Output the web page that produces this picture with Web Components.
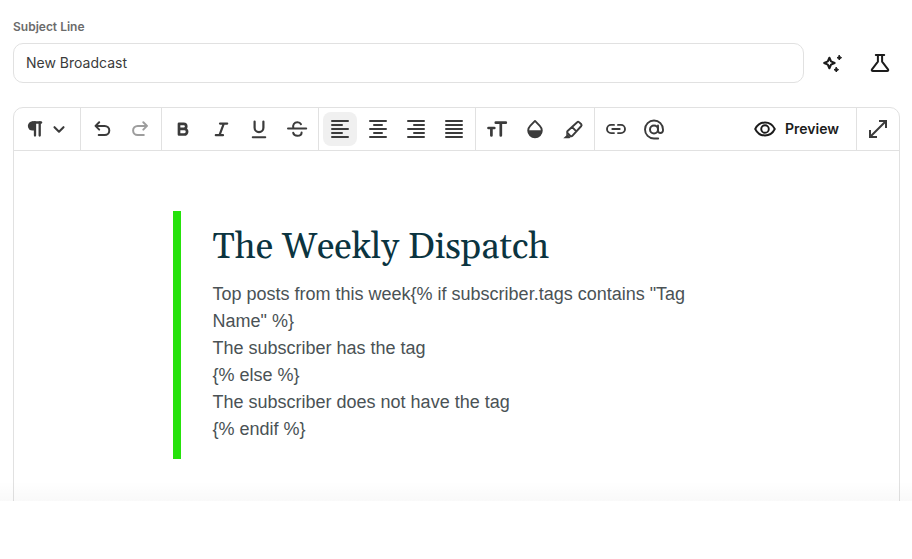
<!DOCTYPE html>
<html lang="en">
<head>
<meta charset="utf-8">
<title>New Broadcast</title>
<style>
    body {
        margin: 0;
        background: #fff;
        font-family: Inter, "Liberation Sans", sans-serif;
        color: #3b3b3b;
    }
</style>
</head>
<body>
<broadcast-page>
    <subject-field slot="subject" label="Subject Line">New Broadcast</subject-field>
    <editor-frame slot="editor">
        <tool-group slot="tools">
            <tool-button icons="pilcrow chevron"></tool-button>
        </tool-group>
        <tool-group slot="tools">
            <tool-button icons="undo"></tool-button>
            <tool-button icons="redo" disabled></tool-button>
        </tool-group>
        <tool-group slot="tools">
            <tool-button icons="bold"></tool-button>
            <tool-button icons="italic"></tool-button>
            <tool-button icons="underline"></tool-button>
            <tool-button icons="strike"></tool-button>
        </tool-group>
        <tool-group slot="tools">
            <tool-button icons="left" active></tool-button>
            <tool-button icons="center"></tool-button>
            <tool-button icons="right"></tool-button>
            <tool-button icons="justify"></tool-button>
        </tool-group>
        <tool-group slot="tools">
            <tool-button icons="size"></tool-button>
            <tool-button icons="drop"></tool-button>
            <tool-button icons="marker"></tool-button>
        </tool-group>
        <tool-group slot="tools" grow>
            <tool-button icons="link"></tool-button>
            <tool-button icons="at"></tool-button>
            <preview-button slot="end">Preview</preview-button>
        </tool-group>
        <tool-group slot="tools">
            <tool-button icons="expand"></tool-button>
        </tool-group>
        <dispatch-quote>
            <span slot="title">The Weekly Dispatch</span>
            Top posts from this week{% if subscriber.tags contains "Tag Name" %}<br>
            The subscriber has the tag<br>
            {% else %}<br>
            The subscriber does not have the tag<br>
            {% endif %}
        </dispatch-quote>
    </editor-frame>
</broadcast-page>

<script>
// all icons are on a 24x24 grid
const icons = {
    pilcrow: '<path d="M18 5.5H9.5" stroke-width="2.4"/><path d="M12 5.5v13M16.7 5.5v13" stroke-width="2.3"/><path d="M12 4.4H9.4a4.5 4.5 0 0 0 0 9.1H12z" fill="currentColor" stroke="none"/>',
    chevron: '<path d="M7.5 10.2l4.500 4.500 4.500-4.500" stroke-width="2.1"/>',
    undo: '<path d="M9.200 5.200L5.500 8.900l3.700 3.700M5.800 8.900h8.900a4.600 4.600 0 0 1 0 9.200H8.700"/>',
    redo: '<path d="M15.300 5.200L19 8.900l-3.700 3.700M18.700 8.900h-9a4.600 4.600 0 0 0 0 9.200h6.100"/>',
    bold: '<path d="M8 6.800h4.700a2.550 2.550 0 0 1 0 5.100H8zM8 11.900h5.300a2.800 2.800 0 0 1 0 5.600H8z" stroke-width="2.7"/>',
    italic: '<path d="M11 6.600h7.200M6.800 18.200H14M14.800 6.600l-4.300 11.600" stroke-width="2.2"/>',
    underline: '<path d="M7.600 4.500v6.200a4.400 4.400 0 0 0 8.800 0V4.500" stroke-width="2.2"/><path d="M5.700 20.200h12.600" stroke-width="1.9"/>',
    strike: '<path d="M3 11.500h18.200M8.400 11.200c-1-3 .8-6 4-6 1.800 0 3 .8 3.600 2M8.200 15.800c.4 1.800 2 3 4.200 3 2.400 0 4.200-1.300 4.200-3.300"/>',
    left: '<path d="M4 4h16M4 8h10M4 12h16M4 16h10M4 20h16"/>',
    center: '<path d="M4 4h16M8 8h8M4 12h16M8 16h8M4 20h16"/>',
    right: '<path d="M4 4h16M10 8h10M4 12h16M10 16h10M4 20h16"/>',
    justify: '<path d="M4 4h16M4 8h16M4 12h16M4 16h16M4 20h16"/>',
    size: '<path d="M10.800 5.700h10M15.800 5.700v12.800M3.500 11h5.800M6.400 11v7.500" stroke-width="2.7"/>',
    drop: '<path d="M12 3.900L7.200 8.800a6.800 6.800 0 1 0 9.600 0z" stroke-width="1.9"/><path d="M5 13.300h14a7 7 0 0 1-14 0z" fill="currentColor" stroke="none"/>',
    marker: '<path d="M16.200 5.200L6.600 14a1.400 1.400 0 0 0-.1 2l2.800 2.900a1.400 1.400 0 0 0 2-.1l9-9.800a1.300 1.300 0 0 0 0-1.700l-2.300-2.200a1.300 1.300 0 0 0-1.800.1zM11.200 10.200l3.900 4" stroke-width="1.9"/><path d="M5.300 16l4.400 4.200-1.300 1.100H2.300l3-2.800z" fill="currentColor" stroke="none"/>',
    link: '<path d="M10 7.900H7.100a4.100 4.100 0 0 0 0 8.200H10M14 7.900h2.900a4.100 4.100 0 0 1 0 8.200H14M8.300 12h7.400" stroke-width="1.9"/>',
    at: '<circle cx="12" cy="12.500" r="4"/><path d="M16 8.500v5a2.500 2.500 0 0 0 5 0v-1a9 9 0 1 0-9 9h4.200" stroke-width="1.9"/>',
    eye: '<path d="M2.200 12C4.300 7.800 7.800 5.500 12 5.500S19.700 7.800 21.800 12c-2.100 4.200-5.600 6.500-9.800 6.500S4.300 16.200 2.200 12z" stroke-width="1.9"/><circle cx="12" cy="12" r="3.800" stroke-width="1.9"/>',
    expand: '<path d="M13 4h7v7M4 13v7h7M20 4L4 20" stroke-linecap="butt" stroke-linejoin="miter"/>',
    sparkle: '<path d="M9.400 6.800l1.600 3.600 3.600 1.600-3.600 1.600-1.600 3.600-1.600-3.600L4.200 12l3.600-1.600z" stroke-width="2.1"/><path d="M19.300 4.400l.8 1.500 1.500.8-1.500.8-.8 1.500-.8-1.500-1.500-.8 1.500-.8zM16.300 16.400l.8 1.500 1.500.8-1.500.8-.8 1.500-.8-1.500-1.500-.8 1.500-.8z" fill="currentColor" stroke-width="1"/>',
    flask: '<path d="M7.800 4h8.400M9.900 4v6.700L4 18.300c-.6.900-.1 1.800.9 1.800h14.200c1 0 1.500-.9.900-1.800l-5.900-7.600V4" stroke-width="2"/>'
};

function icon(name) {
    return `<svg width="24" height="24" viewBox="0 0 24 24" fill="none" stroke="currentColor" stroke-width="2" stroke-linecap="round" stroke-linejoin="round">${icons[name]}</svg>`;
}

class BroadcastPage extends HTMLElement {
    constructor() {
        super();
        this.attachShadow({mode: 'open'}).innerHTML = `
            <style>
                :host {
                    display: flex;
                    flex-direction: column;
                    height: 559px;
                    overflow: hidden;
                }
                main {
                    position: relative;
                    display: flex;
                    flex-direction: column;
                    gap: 24px;
                    box-sizing: border-box;
                    height: 501px;
                    padding: 20px 12px 0 13px;
                    overflow: hidden;
                }
                /* fade over the bottom edge of the scroll area */
                main::after {
                    content: "";
                    position: absolute;
                    left: 0;
                    right: 0;
                    bottom: 0;
                    height: 20px;
                    background: linear-gradient(rgba(0,0,0,0), rgba(0,0,0,.025));
                }
                footer {
                    flex: 1;
                    background: #fff;
                }
            </style>
            <main>
                <slot name="subject"></slot>
                <slot name="editor"></slot>
            </main>
            <footer></footer>
        `;
    }
}

class SubjectField extends HTMLElement {
    constructor() {
        super();
        this.attachShadow({mode: 'open'}).innerHTML = `
            <style>
                :host {
                    display: block;
                    height: 63px;
                }
                label {
                    display: block;
                    height: 23px;
                    font-size: 12px;
                    line-height: 14px;
                    font-weight: 600;
                    color: #6b6b6b;
                }
                .row {
                    display: flex;
                    align-items: center;
                    color: #1c1c1c;
                }
                .input {
                    box-sizing: border-box;
                    width: 791px;
                    height: 40px;
                    border: 1px solid #e1e1e1;
                    border-radius: 10px;
                    padding: 0 12px;
                    font-size: 14px;
                    line-height: 38px;
                    color: #3b3b3b;
                }
                .actions {
                    display: flex;
                    gap: 24px;
                    margin-left: 16px;
                }
                svg {
                    display: block;
                }
            </style>
            <label>${this.getAttribute('label')}</label>
            <div class="row">
                <div class="input"><slot></slot></div>
                <div class="actions">${icon('sparkle')}${icon('flask')}</div>
            </div>
        `;
    }
}

class EditorFrame extends HTMLElement {
    constructor() {
        super();
        this.attachShadow({mode: 'open'}).innerHTML = `
            <style>
                :host {
                    display: block;
                    flex: none;
                    box-sizing: border-box;
                    height: 460px;
                    border: 1px solid #e1e1e1;
                    border-radius: 10px;
                }
                .bar {
                    display: flex;
                    height: 42px;
                    border-bottom: 1px solid #e1e1e1;
                }
                .canvas {
                    display: flex;
                    justify-content: center;
                    padding-top: 60px;
                }
            </style>
            <div class="bar"><slot name="tools"></slot></div>
            <div class="canvas"><slot></slot></div>
        `;
    }
}

class ToolGroup extends HTMLElement {
    constructor() {
        super();
        this.attachShadow({mode: 'open'}).innerHTML = `
            <style>
                :host {
                    display: flex;
                    align-items: center;
                    gap: 4px;
                    padding: 0 4px;
                    border-right: 1px solid #e1e1e1;
                }
                :host([grow]) {
                    flex: 1;
                }
                :host(:last-of-type) {
                    border-right: 0;
                }
                ::slotted([slot=end]) {
                    margin-left: auto;
                }
            </style>
            <slot></slot><slot name="end"></slot>
        `;
    }
}

class ToolButton extends HTMLElement {
    constructor() {
        super();
        this.attachShadow({mode: 'open'}).innerHTML = `
            <style>
                :host {
                    display: flex;
                    padding: 5px;
                    border-radius: 8px;
                    color: #3b3b3b;
                }
                :host([active]) {
                    background: #f0f0f0;
                }
                :host([disabled]) {
                    color: #9d9d9d;
                }
                svg {
                    display: block;
                }
            </style>
            ${this.getAttribute('icons').split(' ').map(icon).join('')}
        `;
    }
}

class PreviewButton extends HTMLElement {
    constructor() {
        super();
        this.attachShadow({mode: 'open'}).innerHTML = `
            <style>
                :host {
                    display: flex;
                    align-items: center;
                    gap: 8px;
                    padding-right: 13px;
                    font-size: 14px;
                    font-weight: 600;
                    color: #1c1c1c;
                }
                span {
                    line-height: 16px;
                    padding-bottom: 1px;
                }
            </style>
            ${icon('eye')}<span><slot></slot></span>
        `;
    }
}

class DispatchQuote extends HTMLElement {
    constructor() {
        super();
        this.attachShadow({mode: 'open'}).innerHTML = `
            <style>
                :host {
                    display: block;
                    box-sizing: border-box;
                    width: 567px;
                    height: 248px;
                    border-left: 8px solid #26e20b;
                    padding: 14px 32px 0 31.5px;
                    font: 18px/27px "Liberation Sans", Arial, sans-serif;
                    color: #4a5255;
                }
                h1 {
                    margin: 0 0 10px;
                    font: 36px/46px Georgia, Gelasio, "Liberation Serif", serif;
                    color: #0b3440;
                    white-space: nowrap;
                }
            </style>
            <h1><slot name="title"></slot></h1>
            <div><slot></slot></div>
        `;
    }
}

customElements.define('broadcast-page', BroadcastPage);
customElements.define('subject-field', SubjectField);
customElements.define('editor-frame', EditorFrame);
customElements.define('tool-group', ToolGroup);
customElements.define('tool-button', ToolButton);
customElements.define('preview-button', PreviewButton);
customElements.define('dispatch-quote', DispatchQuote);
</script>
</body>
</html>
